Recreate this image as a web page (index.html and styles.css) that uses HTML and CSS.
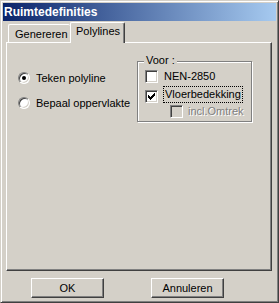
FILE: index.html
```html
<!DOCTYPE html>
<html lang="nl">
<head>
    <meta charset="UTF-8">
    <title>Ruimtedefinities</title>
    <link rel="stylesheet" href="styles.css">
</head>
<body>
    <div class="window">
        <div class="titlebar">Ruimtedefinities</div>

        <div class="tabs">
            <div class="tab">Genereren</div>
            <div class="tab active">Polylines</div>
        </div>

        <div class="panel">
            <div class="options">
                <div class="option">
                    <span class="radio checked"></span>
                    <span>Teken polyline</span>
                </div>
                <div class="option">
                    <span class="radio"></span>
                    <span>Bepaal oppervlakte</span>
                </div>
            </div>

            <div class="group">
                <span class="legend">Voor :</span>
                <div class="check-row">
                    <span class="check"></span>
                    <span class="label">NEN-2850</span>
                </div>
                <div class="check-row focused">
                    <span class="check">
                        <svg width="11" height="11" viewBox="0 0 11 11"><path d="M2 4h1v3h-1zM3 5h1v3h-1zM4 6h1v3h-1zM5 5h1v3h-1zM6 4h1v3h-1zM7 3h1v3h-1zM8 2h1v3h-1z" fill="#000"/></svg>
                    </span>
                    <span class="label">Vloerbedekking</span>
                </div>
                <div class="check-row sub disabled">
                    <span class="check"></span>
                    <span class="label">incl.Omtrek</span>
                </div>
            </div>
        </div>

        <div class="buttons">
            <button class="btn">OK</button>
            <button class="btn">Annuleren</button>
        </div>
    </div>
</body>
</html>
```

FILE: styles.css
```css
body {
    margin: 0;
    font-family: 'Liberation Sans', Arial, sans-serif;
    font-size: 11px;
    color: #000;
    background-color: #d4d0c8;
}
.window {
    box-sizing: border-box;
    width: 279px;
    height: 303px;
    padding: 2px;
    background-color: #d4d0c8;
    border: 1px solid;
    border-color: #d4d0c8 #404040 #404040 #d4d0c8;
    box-shadow: inset 1px 1px #fff, inset -1px -1px #808080;
}
.titlebar {
    height: 18px;
    line-height: 18px;
    padding-left: 1px;
    color: #fff;
    font-size: 12px;
    font-weight: bold;
    background: linear-gradient(to right, #0a246a, #a6caf0);
}

/* tab strip */
.tabs {
    position: relative;
    z-index: 1;
    display: flex;
    align-items: flex-end;
    height: 21px;
    padding-left: 5px;
}
.tab {
    box-sizing: border-box;
    height: 18px;
    width: 62px;
    padding: 3px 0 0 6px;
    line-height: 13px;
    background-color: #d4d0c8;
    border: 1px solid;
    border-bottom: none;
    border-right: none;
    border-color: #fff;
    border-radius: 2px 2px 0 0;
}
.tab.active {
    width: 55px;
    height: 21px;
    margin-bottom: -1px;
    padding: 2px 0 0 5px;
    border-right: 1px solid #404040;
    box-shadow: inset -1px 0 #808080;
}

.panel {
    box-sizing: border-box;
    display: flex;
    align-items: flex-start;
    width: 266px;
    height: 229px;
    margin-left: 3px;
    padding-left: 11px;
    border: 1px solid;
    border-color: #fff #404040 #404040 #fff;
    box-shadow: inset -1px -1px #808080;
}

/* radio buttons */
.options {
    width: 119px;
    padding-top: 29px;
    display: flex;
    flex-direction: column;
    gap: 13px;
}
.option {
    display: flex;
    align-items: center;
    gap: 6px;
    height: 12px;
    line-height: 12px;
    white-space: nowrap;
}
.radio {
    box-sizing: border-box;
    position: relative;
    flex: none;
    width: 12px;
    height: 12px;
    border-radius: 50%;
    background-color: #fff;
    border: 1px solid;
    border-color: #808080 #fff #fff #808080;
    box-shadow: inset 1px 1px #404040, inset -1px -1px #d4d0c8;
}
.radio.checked::after {
    content: '';
    position: absolute;
    left: 3px;
    top: 3px;
    width: 4px;
    height: 4px;
    border-radius: 50%;
    background-color: #000;
}

/* group box */
.group {
    position: relative;
    box-sizing: border-box;
    width: 115px;
    height: 61px;
    margin-top: 18px;
    padding: 8px 0 0 7px;
    border: 1px solid #808080;
    box-shadow: inset 1px 1px #fff, 1px 1px #fff;
}
.legend {
    position: absolute;
    left: 6px;
    top: -8px;
    padding: 0 2px;
    line-height: 13px;
    background-color: #d4d0c8;
}
.check-row {
    display: flex;
    align-items: center;
    gap: 6px;
    height: 13px;
    line-height: 13px;
    white-space: nowrap;
}
.check-row.focused {
    align-items: flex-end;
    height: 17px;
    margin-top: 3px;
    gap: 5px;
}
.check-row.focused .label {
    padding: 1px 1px;
    border: 1px dotted #000;
}
.check-row.sub {
    margin-top: 2px;
    padding-left: 25px;
    gap: 5px;
}
.check {
    box-sizing: border-box;
    flex: none;
    display: block;
    width: 13px;
    height: 13px;
    background-color: #fff;
    border: 1px solid;
    border-color: #808080 #fff #fff #808080;
    box-shadow: inset 1px 1px #404040, inset -1px -1px #d4d0c8;
}
.check svg {
    display: block;
}
.disabled .check {
    background-color: #d4d0c8;
}
.disabled .label {
    color: #808080;
    text-shadow: 1px 1px #fff;
}

/* dialog buttons */
.buttons {
    display: flex;
    gap: 47px;
    padding: 7px 0 0 28px;
}
.btn {
    box-sizing: border-box;
    width: 73px;
    height: 20px;
    padding: 0;
    font: inherit;
    color: #000;
    background-color: #d4d0c8;
    border: 1px solid;
    border-color: #fff #404040 #404040 #fff;
    box-shadow: inset -1px -1px #808080;
}
```
